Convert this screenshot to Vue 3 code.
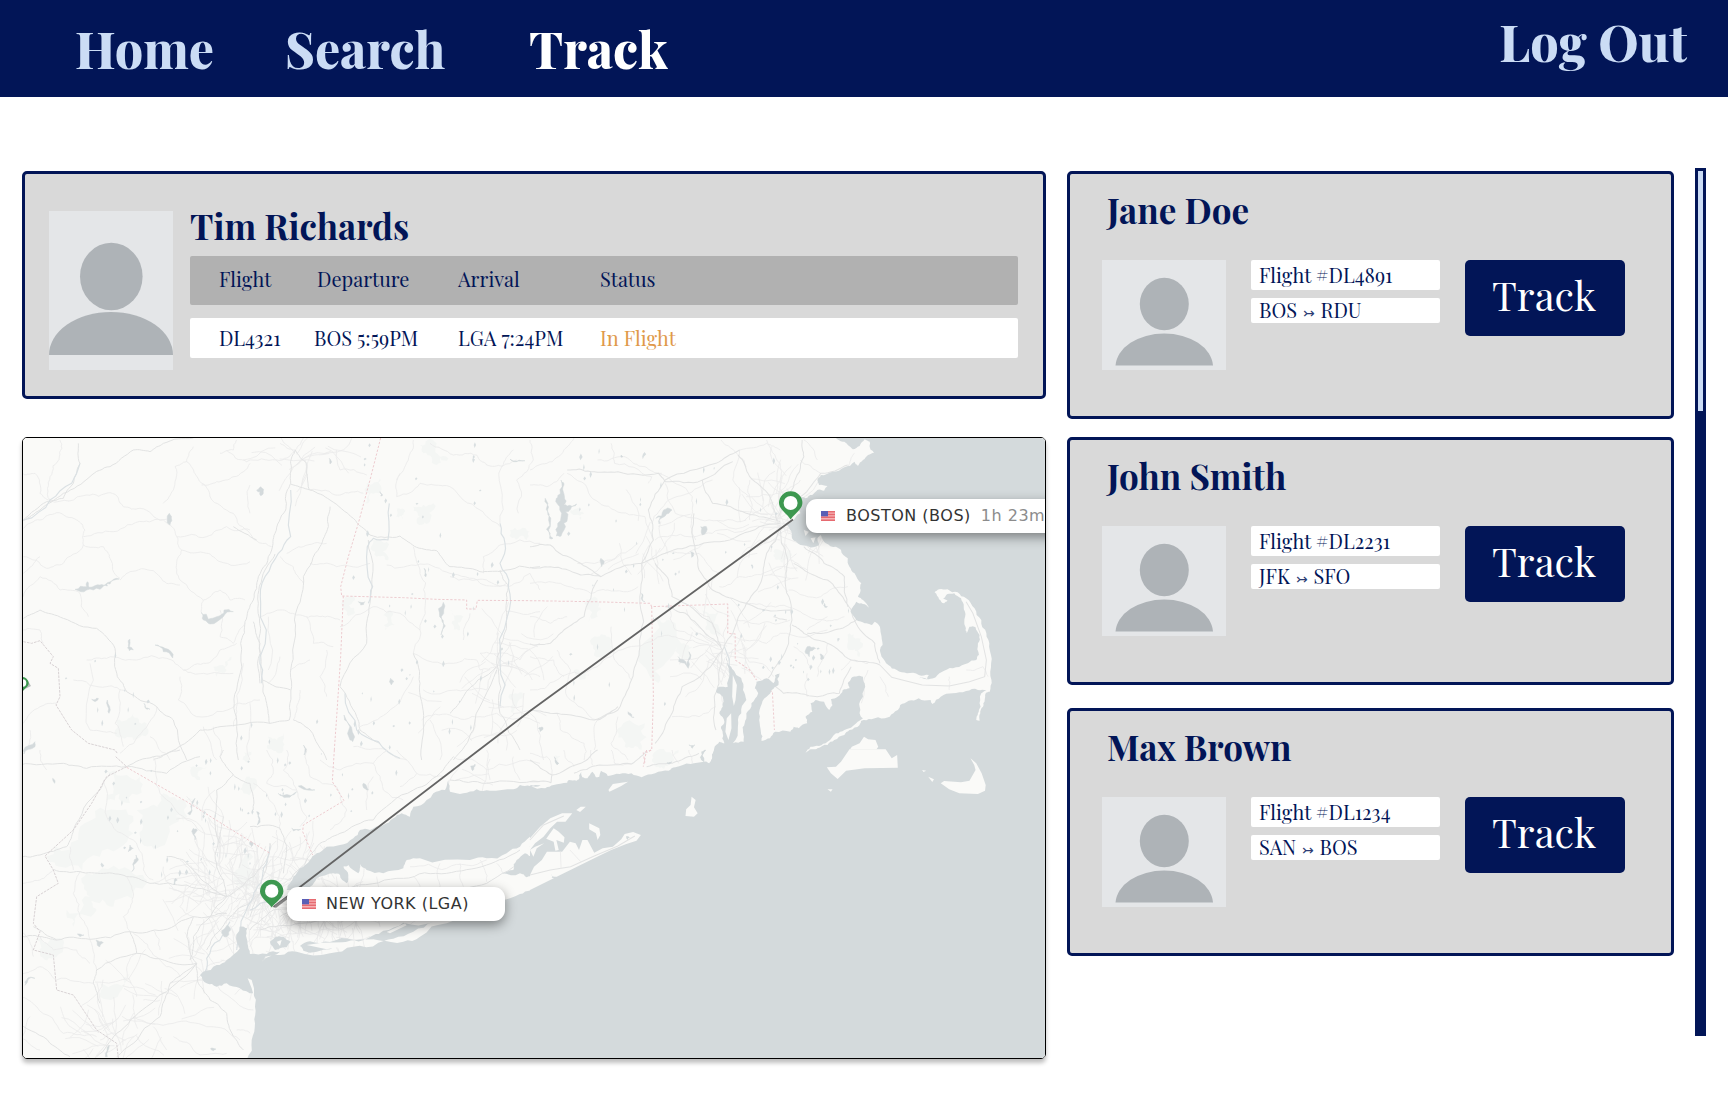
<script setup>
const navLinks = [
  { label: 'Home', cls: 'home' },
  { label: 'Search', cls: 'search' },
  { label: 'Track', cls: 'current' },
]

const people = [
  { name: 'Jane Doe', flight: 'Flight #DL4891', from: 'BOS', to: 'RDU' },
  { name: 'John Smith', flight: 'Flight #DL2231', from: 'JFK', to: 'SFO' },
  { name: 'Max Brown', flight: 'Flight #DL1234', from: 'SAN', to: 'BOS' },
]

// Small seeded generator, so the terrain is the same on every load.
let seed = 7
const rand = () => {
  seed = (seed * 1103515245 + 12345) % 2147483648
  return seed / 2147483648
}

// Breaks straight segments into slightly irregular ones.
const roughen = (d, amount, depth = 2) =>
  d
    .split('M')
    .filter(Boolean)
    .map((sub) => {
      const closed = sub.includes('Z')
      const n = sub.match(/-?[\d.]+/g).map(Number)
      let pts = []
      for (let i = 0; i < n.length; i += 2) pts.push([n[i], n[i + 1]])
      if (closed) pts.push(pts[0])
      for (let k = 0; k < depth; k++) {
        const next = [pts[0]]
        for (let i = 1; i < pts.length; i++) {
          const [ax, ay] = pts[i - 1]
          const [bx, by] = pts[i]
          const len = Math.hypot(bx - ax, by - ay)
          if (len > 6 && len < 260) {
            const s = (rand() - 0.5) * 2 * amount
            next.push([(ax + bx) / 2 - (by - ay) * s, (ay + by) / 2 + (bx - ax) * s])
          }
          next.push([bx, by])
        }
        pts = next
      }
      return 'M' + pts.map((p) => p[0].toFixed(1) + ' ' + p[1].toFixed(1)).join('L') + (closed ? 'Z' : '')
    })
    .join('')

const roughenAll = (group, amount, depth) =>
  Object.fromEntries(Object.entries(group).map(([k, d]) => [k, roughen(d, amount, depth)]))

// Local streets: short wandering lines around the towns, as [x, y, radius, count].
const towns = [
  [265, 900, 75, 110],
  [215, 870, 60, 45],
  [330, 912, 70, 55],
  [785, 525, 55, 60],
  [722, 650, 40, 30],
  [500, 665, 45, 25],
  [110, 1030, 60, 40],
  [470, 740, 60, 15],
  [300, 455, 30, 15],
  [650, 545, 40, 14],
  [200, 960, 80, 20],
]
const streets = towns
  .map(([cx, cy, r, count]) => {
    let out = ''
    for (let i = 0; i < count; i++) {
      const a = rand() * Math.PI * 2
      const q = rand() * r
      let x = cx + Math.cos(a) * q
      let y = cy + Math.sin(a) * q
      let dir = rand() * Math.PI * 2
      out += `M${x.toFixed(1)} ${y.toFixed(1)}`
      for (let k = 0; k < 5; k++) {
        dir += (rand() - 0.5) * 0.9
        x += Math.cos(dir) * 7
        y += Math.sin(dir) * 7
        out += `L${x.toFixed(1)} ${y.toFixed(1)}`
      }
    }
    return out
  })
  .join('')

// Country ponds scattered inland, as [x, y, width, height, count].
const pondAreas = [
  [560, 450, 220, 260, 55],
  [350, 560, 160, 200, 35],
  [100, 760, 160, 120, 45],
  [240, 720, 160, 110, 30],
  [760, 600, 90, 80, 22],
  [40, 650, 120, 90, 10],
  [360, 440, 160, 100, 15],
]
const ponds = pondAreas
  .map(([x0, y0, w, h, count]) => {
    let out = ''
    for (let i = 0; i < count; i++) {
      const x = x0 + rand() * w
      const y = y0 + rand() * h
      const a = 0.5 + rand() * 1.2
      const b = 1 + rand() * 2.6
      out += `M${x.toFixed(1)} ${(y - b).toFixed(1)}L${(x + a).toFixed(1)} ${y.toFixed(1)} ${(x - a * 0.3).toFixed(1)} ${(y + b).toFixed(1)} ${(x - a).toFixed(1)} ${y.toFixed(1)}Z`
    }
    return out
  })
  .join('')

// The map is drawn in four tiles, each with its own local grid.
const tiles = {
  nw: 'translate(20 430) scale(.33333)',
  ne: 'translate(530 430) scale(.33806 .33333)',
  sw: 'translate(20 750) scale(.33333)',
  se: 'translate(530 750) scale(.33806 .33333)',
}

const water = roughenAll({
  ne: 'M905 24L925 35 940 45 955 58 975 48 990 28 1005 35 1008 60 1018 68 1000 75 985 90 970 108 960 95 930 112 895 125 860 135 850 150 855 165 880 168 870 182 850 180 835 195 815 205 800 200 790 225 800 250 780 270 760 285 770 300 775 325 800 345 825 350 855 345 850 325 860 315 875 340 905 350 920 360 940 385 945 410 960 430 980 460 978 480 970 500 985 510 1003 533 985 522 965 515 948 545 965 570 990 580 1010 585 1020 575 1035 590 1040 620 1043 645 1035 660 1040 680 1060 705 1085 720 1115 730 1150 735 1180 735 1175 748 1150 745 1180 748 1200 742 1225 722 1260 712 1295 700 1320 690 1328 675 1325 640 1330 615 1318 592 1300 590 1292 610 1288 590 1287 560 1283 530 1275 505 1255 490 1235 492 1222 505 1235 512 1225 520 1210 508 1197 487 1210 478 1235 478 1265 487 1290 505 1315 535 1335 570 1350 610 1358 650 1364 700 1365 750 1360 785 1348 790 1345 810 1340 830 1332 850 1330 872 1320 870 1325 850 1333 830 1335 790 1350 780 1325 780 1290 783 1250 790 1215 800 1190 822 1185 810 1150 805 1120 812 1095 825 1075 850 1050 865 1010 868 980 872 975 885 945 900 930 915 900 930 880 945 850 955 820 967 830 950 855 948 880 935 905 910 930 900 965 880 985 865 975 850 975 830 985 800 990 760 985 740 970 738 950 745 940 760 945 775 925 780 910 800 890 808 895 825 885 840 870 815 845 810 830 820 835 845 815 860 820 880 795 895 780 890 770 905 725 905 710 925 685 933 683 905 678 870 682 830 700 800 715 780 735 765 738 730 725 735 720 760 700 745 670 755 665 775 675 790 655 820 640 850 635 880 630 905 632 935 600 940 615 890 625 850 640 810 630 780 625 745 610 735 595 710 580 680 590 730 585 770 560 770 550 785 570 800 570 830 560 850 575 875 565 890 570 910 575 940 560 935 545 955 535 993 1530 993 1530 20Z',
  se: 'M545 -2L530 40 515 35 475 42 430 52 410 62 370 70 330 82 300 70 265 72 230 78 210 62 205 80 195 82 185 65 170 85 155 82 152 65 145 88 138 92 115 90 110 98 70 105 45 115 0 106 0 930 1530 930 1530 -2Z',
  sw: 'M1562 105L1530 108 1500 105 1480 118 1410 122 1370 118 1330 130 1290 125 1285 90 1275 120 1240 130 1220 150 1180 170 1170 200 1145 190 1120 205 1090 225 1050 240 1020 240 1000 265 960 285 920 290 890 310 870 330 840 355 820 380 810 400 800 420 830 430 870 410 890 385 940 370 960 375 980 400 985 375 970 350 985 345 1015 370 1020 342 1040 360 1090 370 1150 355 1160 330 1200 325 1350 330 1400 325 1460 310 1500 290 1530 260 1532 240 1532 105ZM1445 370L1480 360 1490 330 1515 310 1540 320 1535 345 1545 370 1520 382 1500 370ZM1532 421L1500 432 1440 455 1400 475 1280 520 1200 560 1150 575 1075 578 1000 590 930 610 830 605 780 615 725 635 735 620 780 605 740 612 690 612 685 595 680 565 682 535 660 530 652 580 660 595 620 630 590 645 550 665 540 675 560 700 590 710 620 700 660 715 700 730 705 770 705 820 695 870 680 930 1532 930ZM750 575L765 562 790 560 812 575 800 592 765 600ZM840 588L870 574 930 576 1000 570 1060 556 1090 542 1150 518 1240 516 1180 545 1120 566 1060 568 930 598 850 602Z',
}, 0.14, 2)

const islands = {
  ne: 'M600 735L612 765 608 810 603 828 598 800ZM582 865L595 850 596 895 587 930 578 905ZM650 775L660 790 650 810ZM930 993L940 968 952 950 975 940 988 920 1000 928 1022 930 1030 950 1020 965 1045 968 1062 993ZM1038 960L1060 968 1048 972ZM810 300L825 305 815 318ZM830 325L845 322 838 340ZM1300 982L1310 993 1300 990Z',
  se: 'M0 265L30 230 60 205 95 190 125 190 105 215 80 215 60 235 40 260 15 280 0 300ZM70 235L85 245 102 262 100 278 78 270 85 300 75 302 70 275 48 266ZM0 300L15 290 42 280 20 295 10 320ZM137 180L150 170 165 170 148 186ZM175 220L205 235 208 255 200 270 195 250 175 238ZM0 375L12 350 35 330 50 305 95 305 118 275 135 280 145 300 155 270 170 270 190 308 215 295 245 290 270 268 280 252 305 246 328 255 315 272 285 282 240 300 190 325 130 355 70 385 0 420ZM478 140L490 150 485 172 496 190 485 200 460 198 462 178 475 165ZM232 120L245 102 290 95 270 108 235 125ZM945 -2L920 35 905 50 878 52 890 70 910 87 935 62 990 55 1088 53 1086 15 1070 25 1052 -2ZM1303 25L1320 40 1336 70 1348 105 1346 122 1325 132 1270 130 1240 118 1215 100 1225 93 1275 97 1300 92 1318 60 1314 45ZM1178 80L1195 88 1190 96ZM1160 60L1172 62 1164 66ZM880 118L895 118 890 125ZM815 8L830 -2 822 -2Z',
  sw: 'M683 685L695 690 702 715 702 740 695 715ZM1100 546L1155 520 1160 526 1110 550ZM860 585L905 578 1000 576 1000 583 920 598ZM770 575L785 570 780 588Z',
}

const lakes = roughenAll({
  nw: 'M165 478L200 470 202 455 208 472 240 465 262 468 262 458 298 447 270 462 240 478 200 480ZM543 548L565 568 590 560 612 540 640 545 610 560 570 582 550 570ZM330 628L328 650 340 660 328 662 325 645ZM405 645L435 655 458 684 430 665ZM448 250L454 258 450 285ZM710 180L722 170 730 190 722 197ZM972 855L985 880 998 935 990 930ZM1270 517L1264 560 1263 615 1259 560ZM10 962L45 935 45 950 12 972ZM215 808L235 805 230 812ZM1212 415L1218 440 1214 438ZM262 810L267 850 264 845ZM372 820L390 838 375 832ZM1080 185L1088 195 1082 198ZM1112 745L1122 755 1114 765ZM1015 515L1035 515 1022 525ZM850 945L858 955 852 975ZM928 85L935 95 930 102ZM1470 88L1515 92 1480 95Z',
  ne: 'M92 150L98 170 102 200 100 225 110 228 138 222 120 238 105 245 100 280 92 318 78 318 82 280 88 240 78 205 90 190ZM45 205L52 240 60 290 68 325 58 325 55 270ZM372 265L395 240 420 240 400 258 382 282 385 262ZM505 290L522 290 510 315ZM820 650L845 655 830 662 826 680 815 670ZM858 672L868 680 862 690ZM438 680L462 705 470 665 468 715 440 695ZM470 945L488 945 480 955ZM330 490L340 515 334 512ZM210 385L216 390 212 410ZM270 75L275 80 270 82ZM870 520L880 530 872 532ZM290 845L308 862 300 860ZM475 365L485 370 478 382ZM25 895L38 892 30 905Z',
  sw: 'M525 145L510 195 503 190ZM710 185L718 190 712 225ZM775 130L790 136 830 125 800 142ZM835 108L870 115 885 120 840 112ZM348 315L355 330 335 365 342 335ZM228 570L250 578 240 590 232 586ZM20 690L45 685 15 706ZM172 552L192 555 180 560ZM520 235L532 240 525 270ZM330 285L340 295 325 305ZM467 385L472 390 462 405ZM815 235L842 238 820 243ZM98 85L104 90 104 100ZM605 550L622 525 632 540 612 560ZM1352 48L1365 42 1358 62ZM1030 100L1045 120 1036 116ZM690 275L700 280 694 290ZM572 895L588 897 580 902ZM256 920L268 885 262 920Z',
  se: 'M72 20L85 40 80 44ZM62 372L78 380 64 384ZM285 258L298 262 288 270ZM508 5L515 35 520 0ZM405 38L420 35 412 42Z',
}, 0.25, 2)

const parks = roughenAll({
  nw: 'M1200 45L1250 40 1285 85 1250 105 1210 70ZM1040 160L1080 145 1075 190 1035 220ZM1180 230L1240 220 1225 280 1190 270ZM1130 235L1155 245 1150 268 1128 260ZM1060 330L1100 335 1105 390 1070 380ZM975 500L1003 500 1005 550 980 555ZM1090 555L1120 550 1125 585 1095 600ZM290 870L340 850 380 880 340 930 290 920ZM580 710L635 680 620 720 590 740ZM745 920L790 910 775 970 740 950ZM1470 300L1530 305 1520 330 1475 325ZM1465 800L1510 795 1480 850ZM1290 540L1330 560 1320 600 1295 580ZM670 965L695 965 690 990 668 990Z',
  ne: 'M160 520L205 520 200 560 170 580ZM200 620L240 630 220 680 190 670ZM945 610L985 620 975 680 950 660ZM370 560L410 570 400 700 380 760ZM510 540L570 545 560 620 520 600ZM270 890L340 880 330 960 280 950ZM720 365L770 360 765 390 730 390ZM120 240L160 250 150 270ZM430 640L480 650 470 690 440 680ZM130 720L180 730 150 750Z',
  sw: 'M255 60L360 80 330 160 260 150ZM75 320L180 230 290 180 340 250 240 320 120 350ZM350 180L420 170 480 200 420 290 360 260ZM430 130L520 150 490 220 440 200ZM200 370L330 360 380 400 280 470 210 440ZM140 480L210 440 230 480 160 530ZM50 565L130 570 110 620 60 610ZM240 700L330 670 310 710 240 740ZM680 80L710 90 670 130ZM640 370L700 320 720 380 680 420ZM500 40L560 50 540 90Z',
  se: 'M365 10L440 0 410 45 380 50ZM235 290L300 262 250 296ZM75 15L90 20 80 35Z',
}, 0.35, 3)

const majorRoads = roughenAll({
  nw: 'M826 60L812 100 812 160 797 200 797 240 765 310 755 360 715 440 700 510 675 575 662 640 650 780 650 890 655 990M812 162L870 180 930 210 1000 265 1050 315 1140 318 1190 352 1250 362 1290 410 1380 425 1440 425 1560 410M930 230L925 290 900 350 850 440 830 540 818 660 815 770 808 870 750 880 600 890 540 900 440 970 400 990M765 372L735 420 715 520 718 640 728 750 812 780M728 750L740 820 748 880M10 270L80 215 130 205 160 160 180 100 175 40M10 272L60 240 130 190 210 140 270 110 340 60 390 65 430 40 520 24M10 565L60 540 130 565 230 595 285 655 292 740 320 785 410 830 460 870 500 990M1440 420L1465 470 1460 560 1430 700 1440 850 1500 960M1430 710L1330 800 1290 850M1430 720L1360 900 1300 990M820 870L870 900 920 990M1045 330L1050 520 1040 640 960 770 1010 860 1020 900 1080 940M700 575L720 640 720 760M826 60L860 100 868 180M1180 670L1200 760 1210 870 1205 990M710 330L640 290',
  ne: 'M0 412L60 410 150 435 210 440 330 400 400 370 500 345 620 315 740 280M110 120L180 125 260 125 380 130 400 155 510 150 600 95M740 290L700 370 690 430 640 520 600 610 570 660M570 660L450 770 420 850 370 940M615 75L650 140 710 200 730 270M740 300L760 380 755 460 775 570 765 640 705 745M780 400L880 450 930 510 960 570 1020 640 1035 700M330 400L325 500 325 650 300 750 260 840 200 870M330 400L365 330 350 240 400 150 550 100 620 60M510 150L540 220 640 250 740 275M0 642L60 640 100 600 160 560 200 450M775 585L810 610 880 640 950 690 1035 705M705 750L750 790 850 800 915 790 950 710M570 660L530 620 460 550 400 530M570 660L560 720 545 800 550 900M810 350L870 400 930 440 940 530M805 30L810 80 780 170 735 260M0 840L80 850 190 870 260 830M370 400L410 450 420 500 540 580 565 650M800 200L860 130 940 105M0 350L60 345 140 395 210 440M485 250L485 340 500 420 540 480 620 515 770 540M820 610L900 600 965 570M720 560L760 570',
  sw: 'M0 45L130 40 200 55 320 50 400 20 480 0M320 50L440 70 540 20M0 320L60 315 140 290 160 240 240 120 270 70M100 358L180 365 250 370 320 380 390 400 500 405 620 440M40 530L110 570 210 568 330 545 430 540 520 500 620 490M330 545L350 610 460 640 530 640M530 640L450 700 420 800 340 880 290 920M530 640L380 770 290 850 230 920M530 640L535 700 570 750 620 790 640 860 670 900M0 560L60 560 110 570M350 610L230 660 220 700 240 760M0 820L90 880 150 920M620 440L590 350 600 260 610 200M620 440L700 380 740 330 750 280M620 440L560 400 490 330 440 320M620 440L520 560 510 630M600 280L590 120 640 75 690 100 700 180M690 230L780 235 800 290 790 370M810 390L860 330 900 280 960 250 1060 210 1180 120 1270 60 1300 20M690 540L760 480 810 475 900 490M750 280L740 350 720 430 690 500M640 75L600 20 610 0M780 500L850 450 1000 410 1150 385 1280 370 1400 345 1500 300M720 540L840 520 960 500 1100 490 1280 440 1400 400 1530 330M1290 90L1400 100 1560 95M560 600L600 540 650 480 720 430M530 640L500 560 520 500',
  se: 'M0 95L62 98 65 75 150 40 200 0M65 75L0 30M205 45L300 42 345 5M205 45L130 70M345 50L420 40 500 10M0 375L60 360 120 355 190 325M0 270L40 225 100 198M190 325L260 290 320 258',
}, 0.08, 3)

const minorRoads = roughenAll({
  nw: 'M120 30L118 80 90 140 90 210M10 132L45 130 60 190 90 212M90 212L200 195 270 188 310 230 360 235 430 270 470 320 560 320 620 290 690 300M10 295L60 270 110 248 170 270 195 300 190 345 130 400 80 415 10 380M190 320L280 305 370 275 440 268M190 345L250 350 270 385 300 445M470 320L485 360 470 400 480 450 550 510 545 550M485 360L560 370 600 395 690 395M520 50L500 95 465 110 460 180 430 220M500 95L545 160 570 200 640 250 690 310 755 350M690 100L640 140 590 155 545 165M300 450L330 425 400 422 440 460 480 465M690 165L690 250M620 60L680 95 770 90 826 65M950 60L960 120 1040 135M870 180L960 195 1030 190M1140 130L1130 200 1200 160 1290 170 1380 240 1440 290M1180 30L1165 90 1130 150M1230 40L1300 75 1370 75 1400 105 1490 90M800 370L850 350 920 340M780 380L820 410 850 460M550 510L600 480 630 510 675 510M600 540L600 620 640 640 675 580M720 560L780 540 830 555 900 560 960 570M745 560L745 720M860 560L880 640 940 650M810 720L850 700 870 690M10 500L60 440 120 480 180 490 205 560M10 430L60 380M200 690L260 685 350 690 440 685 490 720 560 700 600 660 650 640M490 720L550 730 640 730M480 740L475 810 530 860 650 820 720 810M160 750L260 770 320 785M210 700L210 900 290 910M300 780L285 880 310 950M410 830L370 900 300 970M550 890L590 990M580 890L600 980M840 780L830 830 820 870M920 660L900 740 920 800M960 590L1060 530 1140 550 1200 600M1200 600L1180 670 1300 700 1370 690M1200 600L1215 500 1200 420 1180 350M1330 630L1350 550M1380 670L1460 670 1500 690 1560 640M1370 690L1380 720 1430 710M1560 740L1500 720 1440 710M1430 710L1400 780 1310 780 1210 780M1430 850L1560 880M1205 870L1290 855 1380 860 1430 850M1180 740L1100 850 1020 890M1230 870L1260 990M1100 405L1200 402 1290 430 1380 460 1460 460M1050 400L950 410 870 400M1530 30L1540 90 1490 150 1495 250M1480 60L1445 110 1440 280M650 30L640 60 600 70M850 24L826 60 780 40M10 600L60 600 70 640M10 880L60 830 110 820M30 900L30 960M390 920L450 990M690 820L690 990M1000 950L1100 960 1160 990M640 890L650 830 670 700M780 680L745 760M1560 340L1440 345 1390 380 1390 430M1465 470L1530 430 1560 480M1460 545L1560 545M1465 470L1400 450 1290 440',
  ne: 'M0 120L50 100 100 60 130 24M200 90L280 80 340 110 390 130M240 40L250 100 360 140 350 160M100 130L50 170 0 165M110 130L180 200 250 240 340 260 365 330M380 130L480 200 480 250 490 330M540 150L470 190 410 210 360 280M620 60L600 150 650 200 650 270M700 30L740 100 750 200M620 60L700 40 740 60M800 90L860 130M810 30L850 90M960 70L940 110M640 200L740 190 800 150M370 330L470 320 560 300 740 290M400 370L500 370 560 430 530 480M0 460L90 460 180 490 230 480 320 470M320 340L240 390 140 400M640 520L700 530 800 545 870 570 930 560M740 610L880 600M610 570L700 575 770 570M600 620L700 640 740 610M610 660L700 710 720 740M570 660L500 640 420 620 340 640 240 680 150 730 80 750 0 780M200 870L190 960M240 590L250 690 300 750M80 660L120 720 110 800 200 870M410 530L430 600 530 640M480 530L530 560 570 620M585 570L575 650M570 660L530 690 500 770 460 800M540 700L580 740M820 730L820 800M780 650L830 720M880 640L850 740M1000 720L980 820M1035 740L1060 800M1240 740L1240 780M1000 700L950 690 920 720M765 480L860 500 940 470M690 430L620 440 560 470M770 390L820 420M740 330L680 330 620 390M0 680L70 690 100 740M0 850L40 990M80 850L90 900 160 940 160 990M260 860L240 940 290 990M420 860L500 860 550 830M0 560L60 580 110 560M400 160L430 250 530 270 640 270M730 270L760 220 800 190M650 150L650 200M565 30L620 80 640 110M880 560L820 600M1290 720L1340 710 1355 740',
  sw: 'M250 90L260 200 340 270 370 360 400 390M400 20L420 130 500 210 600 260M60 0L80 60M150 290L160 360M180 365L160 430 180 500 210 568M0 400L60 390 100 360M320 380L340 440 310 500 330 545M500 405L480 470 520 500M560 400L580 470 620 490M480 330L540 400 620 430M610 200L540 180 500 140M700 100L740 130 780 200 780 240M740 0L760 60 740 100 830 120 860 200 840 230M800 0L790 60 830 120M860 0L870 80 950 110 980 180 930 240M900 30L960 60 1060 40 1100 0M1060 40L1090 120 1150 150M1130 0L1190 70 1270 80M1190 70L1140 110M1060 80L1040 180M1300 20L1400 60 1560 40M1400 0L1410 90M1480 20L1500 90M700 300L680 400 640 480M720 280L710 400M770 240L760 320 740 400M800 290L780 370 750 420M840 260L820 330 770 400M860 250L850 330M620 440L680 450 740 440M540 330L560 400 540 460M430 350L460 420 560 450 620 440M400 400L460 370 520 370 580 400M510 630L560 560 600 500 660 430M340 550L390 600 440 650 480 680M350 610L320 660 350 740M220 700L110 690 60 650 0 670M210 570L230 660M0 740L50 770 130 850 230 860M30 800L0 870M0 860L60 900M340 800L460 820 560 830 660 870M420 750L370 750M450 700L560 690M400 830L440 900M530 650L600 720 700 780M560 650L610 630M650 840L690 850M460 860L530 910 620 910M290 850L240 870M700 540L800 530 940 540 1080 520M720 500L760 550 780 590M760 480L850 490 960 480 1060 500M740 560L830 550M850 560L830 480M900 560L890 420M960 560L950 410M1020 550L1010 400M1080 530L1070 380M1180 380L1200 410M1260 430L1260 340M1330 410L1320 340M1400 395L1380 330M1450 370L1430 340M1170 350L1280 355 1400 330M690 590L720 530M0 540L20 560 40 620M60 560L100 600 170 600 210 640M400 540L420 600',
  se: 'M0 10L50 20 65 75M100 0L130 50M185 45L180 0M240 0L250 40 300 42M90 305L92 355M118 310L150 335M420 0L440 40M470 0L480 40M970 30L1040 40M990 50L1000 10M1280 110L1330 100M0 290L50 240',
}, 0.13, 3)

const stateLines = {
  nw: 'M1082 24L1050 150 1015 280 985 380 962 470 965 498 1150 503 1250 508 1340 510 1340 537 1368 537 1372 511 1530 512M970 498L962 680 950 860 943 960',
  ne: 'M0 512L180 515 355 520 360 530 585 522 585 610 607 612 607 690 650 720 670 750M685 775L717 785 723 900M360 530L365 800 360 960 335 968 340 1000',
  sw: 'M943 0L937 95 972 152 850 225 848 245 878 315M320 52L500 155 620 230 750 310',
  se: 'M345 0L335 50M358 0L345 8',
}

const riverLines = {
  nw: 'M10 635L35 640 60 632 100 680 90 700 115 715 120 800 108 825 155 900 205 940 285 960 292 970',
  sw: 'M287 20L320 50 260 80 215 160 160 240 75 318 100 360 115 400 50 440 40 520 60 545 40 600 100 615 110 720 160 735 230 840 290 880 295 924',
}

const tideways = roughenAll({
  nw: 'M812 180L812 320 775 370 735 440 722 520 720 680 725 760M1108 220L1104 330 1060 325 1042 350 1058 470 1045 520M1440 280L1455 340 1440 400 1465 470 1462 560 1440 700 1440 830M180 100L155 160 90 210 10 270M975 790L1010 900 1075 935 1140 985',
  ne: 'M590 730L575 650',
  sw: 'M660 560L670 500 700 440 722 400 740 340 750 290M690 480L720 460 790 440M555 665L560 625 600 570 630 515M650 600L660 530',
}, 0.12, 2)
</script>

<template>
  <div class="page">
    <nav class="nav">
      <a v-for="l in navLinks" :key="l.label" :class="['nav-link', l.cls]">{{ l.label }}</a>
      <a class="nav-link logout">Log Out</a>
    </nav>

    <main class="content">
      <section class="left">
        <article class="card tracked">
          <svg class="avatar-large" viewBox="0 0 124 159">
            <rect width="124" height="159" fill="#e4e6e8" />
            <ellipse cx="62.3" cy="65.5" rx="31.3" ry="33.7" fill="#aeb3b7" />
            <path d="M0 144A62 43 0 0 1 124 144Z" fill="#aeb3b7" />
          </svg>
          <div class="details">
            <h2 class="name tracked-name">Tim Richards</h2>
            <div class="row head">
              <span>Flight</span>
              <span>Departure</span>
              <span>Arrival</span>
              <span>Status</span>
            </div>
            <div class="row data">
              <span>DL4321</span>
              <span>BOS 5:59PM</span>
              <span>LGA 7:24PM</span>
              <span class="in-flight">In Flight</span>
            </div>
          </div>
        </article>

        <div class="map">
          <svg class="map-canvas" viewBox="23 438 1022 620">
            <rect x="23" y="438" width="1022" height="620" fill="#fafaf8" />
            <g v-for="(t, k) in tiles" :key="k" :transform="t">
              <path :d="parks[k]" fill="#f4f6f4" />
            </g>
            <path :d="streets" class="street" />
            <g v-for="(t, k) in tiles" :key="'r' + k" :transform="t" stroke-linejoin="round">
              <path :d="minorRoads[k]" class="minor" />
              <path :d="majorRoads[k]" class="major" />
              <path :d="tideways[k]" class="tideway" />
              <path :d="lakes[k]" fill="#d4dadc" stroke="#d4dadc" stroke-width="1.5" />
              <path :d="stateLines[k]" class="state" />
              <path :d="riverLines[k]" class="river-line" />
            </g>
            <path :d="ponds" fill="#d9dfe1" />
            <g v-for="(t, k) in tiles" :key="'w' + k" :transform="t">
              <path :d="water[k]" fill="#d4dadc" />
              <path :d="islands[k]" fill="#fafaf8" />
            </g>
            <g :transform="tiles.se">
              <path d="M0 375L60 360 120 350 190 318M0 270L40 225 100 198M190 318L260 288 310 258" class="major" />
              <path d="M90 305L92 355M118 300L150 335" class="minor" />
              <path :d="lakes.se" fill="#d4dadc" />
            </g>
            <g :transform="tiles.ne">
              <path d="M1035 705L1070 742 1110 752 1160 765 1240 768 1300 755 1345 740 1350 690 1335 620 1310 550 1290 515" class="major" />
            </g>
            <path d="M793 519.5L530 711 479 750 300 887 273.5 907" fill="none" stroke="#646464" stroke-width="1.8" />
            <path d="M275 907L287 898" stroke="#8a8a8a" stroke-width="2.5" />
            <path d="M271.7 907.5C269 903 260 898 260 891.5A11.7 11.7 0 0 1 283.4 891.5C283.4 898 274.5 903 271.7 907.5Z" fill="#3d9850" />
            <circle cx="271.7" cy="891" r="6.7" fill="#fff" />
            <path d="M790.6 519.5C788 514.5 779 509.5 779 503A11.7 11.7 0 0 1 802.4 503C802.4 509.5 793.5 514.5 790.6 519.5Z" fill="#3d9850" />
            <circle cx="790.6" cy="503" r="7" fill="#fff" />
            <path d="M23 690L31 686 28 681Z" fill="#b9bcbc" />
            <path d="M22 677A6.5 6.3 0 0 1 28.7 683C28.7 686.5 25 688 23 691Z" fill="#3d9850" />
            <circle cx="22.5" cy="683" r="3.8" fill="#fff" />
          </svg>
          <div class="tag lga">
            <svg class="flag" viewBox="0 0 14 10">
              <rect width="14" height="10" fill="#f6b3b5" />
              <path d="M0 .7H14M0 3.5H14M0 6.3H14M0 9.2H14" stroke="#e66a70" stroke-width="1.4" />
              <rect width="7" height="5.3" fill="#5a5fb5" />
            </svg>
            <span>NEW YORK (LGA)</span>
          </div>
          <div class="tag bos">
            <svg class="flag" viewBox="0 0 14 10">
              <rect width="14" height="10" fill="#f6b3b5" />
              <path d="M0 .7H14M0 3.5H14M0 6.3H14M0 9.2H14" stroke="#e66a70" stroke-width="1.4" />
              <rect width="7" height="5.3" fill="#5a5fb5" />
            </svg>
            <span>BOSTON (BOS)</span>
            <span class="eta">1h 23m</span>
          </div>
        </div>
      </section>

      <section class="list">
        <article v-for="p in people" :key="p.name" class="card person">
          <h2 class="name">{{ p.name }}</h2>
          <div class="person-body">
            <svg class="avatar-small" viewBox="0 0 124 110">
              <rect width="124" height="110" fill="#e4e6e8" />
              <ellipse cx="62.3" cy="44" rx="24.5" ry="26.3" fill="#aeb3b7" />
              <path d="M13.5 105.5A48.8 33.5 0 0 1 111 105.5Z" fill="#aeb3b7" />
            </svg>
            <div class="chips">
              <div class="chip">{{ p.flight }}</div>
              <div class="chip route">{{ p.from }} <span class="arrow">↣</span> {{ p.to }}</div>
            </div>
            <button class="track-btn">Track</button>
          </div>
        </article>
      </section>

      <div class="scrollbar"><div class="thumb"></div></div>
    </main>
  </div>
</template>

<style>
body {
  background: #fff;
}
</style>

<style scoped>
.page {
  width: 1728px;
  height: 1117px;
  overflow: hidden;
  background: #fff;
  color: #021557;
  font-family: 'Playfair Display', 'Liberation Serif', serif;
}
.nav {
  display: flex;
  box-sizing: border-box;
  height: 97px;
  padding: 19px 0 0 75px;
  background: #021557;
}
.nav-link {
  color: #cbdcf5;
  font-size: 50px;
  font-weight: 800;
  line-height: 60px;
  white-space: nowrap;
}
.home {
  width: 210px;
}
.search {
  width: 244px;
}
.current {
  color: #fff;
}
.logout {
  margin: -7px 41px 0 auto;
}
.content {
  display: flex;
  align-items: flex-start;
  padding: 71px 0 0 22px;
}
.left {
  width: 1024px;
  padding-top: 3px;
}
.card {
  box-sizing: border-box;
  border: 3px solid #021557;
  border-radius: 5px;
  background: #d9d9d9;
}
.tracked {
  display: flex;
  height: 228px;
  padding-left: 24px;
}
.avatar-large {
  width: 124px;
  height: 159px;
  margin-top: 37px;
}
.details {
  width: 828px;
  margin-left: 17px;
  padding-top: 30px;
}
.name {
  margin: 0;
  font-size: 35px;
  font-weight: 700;
  line-height: 44px;
  white-space: nowrap;
}
.tracked-name {
  margin-bottom: 8px;
}
.row {
  display: grid;
  box-sizing: border-box;
  padding-left: 29px;
  border-radius: 2px;
  font-size: 20px;
  white-space: nowrap;
}
.head {
  grid-template-columns: 98px 141px 142px auto;
  height: 49px;
  background: #b1b1b1;
  line-height: 46px;
}
.data {
  grid-template-columns: 95px 144px 142px auto;
  height: 40px;
  margin-top: 12.5px;
  background: #fff;
  line-height: 39px;
}
.in-flight {
  color: #e0994a;
}
.map {
  position: relative;
  box-sizing: border-box;
  height: 622px;
  margin-top: 38px;
  overflow: hidden;
  border: 1px solid #000;
  border-radius: 5px;
  box-shadow: 0 4px 4px rgba(0, 0, 0, 0.25);
}
.map-canvas {
  display: block;
  width: 1022px;
  height: 620px;
}
.street {
  fill: none;
  stroke: #ebebeb;
  stroke-width: 0.8;
}
.minor {
  fill: none;
  stroke: #ebebeb;
  stroke-width: 2.6;
}
.major {
  fill: none;
  stroke: #e2e3e3;
  stroke-width: 3;
}
.tideway {
  fill: none;
  stroke: #dbe1e4;
  stroke-width: 3.5;
}
.state {
  fill: none;
  stroke: #edccd0;
  stroke-width: 3;
  stroke-dasharray: 7 5;
}
.river-line {
  fill: none;
  stroke: #d8d2d4;
  stroke-width: 3;
  stroke-dasharray: 8 3;
}
.tag {
  position: absolute;
  display: flex;
  align-items: center;
  box-sizing: border-box;
  height: 34px;
  padding-left: 15px;
  border-radius: 11px;
  background: #fff;
  box-shadow: 0 4px 12px rgba(0, 0, 0, 0.42);
  color: #333;
  font-family: 'DejaVu Sans', sans-serif;
  font-size: 16px;
  line-height: 34px;
  letter-spacing: 0.5px;
  white-space: nowrap;
}
.lga {
  top: 449px;
  left: 264px;
  width: 218px;
}
.bos {
  top: 61px;
  left: 783px;
  width: 270px;
}
.flag {
  width: 14px;
  height: 10px;
  margin-right: 10px;
}
.bos .flag {
  margin-right: 11px;
}
.eta {
  margin-left: 10px;
  color: #8c8c8c;
}
.list {
  display: flex;
  flex-direction: column;
  width: 607px;
  margin-left: 21px;
  padding-top: 3px;
}
.person {
  height: 248px;
  margin-bottom: 18px;
  padding: 14px 0 0 32px;
}
.person:nth-child(2) {
  margin-bottom: 23px;
}
.person .name {
  padding-left: 5px;
}
.person-body {
  display: flex;
  align-items: flex-start;
  margin-top: 28px;
}
.avatar-small {
  width: 124px;
  height: 110px;
}
.chips {
  width: 189px;
  margin-left: 25px;
}
.chip {
  box-sizing: border-box;
  height: 30px;
  margin-bottom: 8px;
  padding-left: 8px;
  border-radius: 2px;
  background: #fff;
  font-size: 20px;
  line-height: 29px;
  white-space: nowrap;
}
.route {
  height: 24.5px;
  margin: 0;
  line-height: 23px;
}
.arrow {
  margin: 0 0.9px;
  color: #2c3c74;
  font-family: 'DejaVu Sans', sans-serif;
  font-size: 14px;
  line-height: 0;
}
.track-btn {
  width: 159.5px;
  height: 76px;
  margin-left: 25px;
  padding: 0 0 8px 27px;
  border: 0;
  border-radius: 5px;
  background: #021557;
  color: #fff;
  font-family: inherit;
  font-size: 40px;
  line-height: 67px;
  text-align: left;
}
.scrollbar {
  box-sizing: border-box;
  width: 11px;
  height: 868px;
  margin-left: 21px;
  padding: 3px;
  background: #021557;
}
.thumb {
  height: 240px;
  background: #cbdcf5;
}
</style>
